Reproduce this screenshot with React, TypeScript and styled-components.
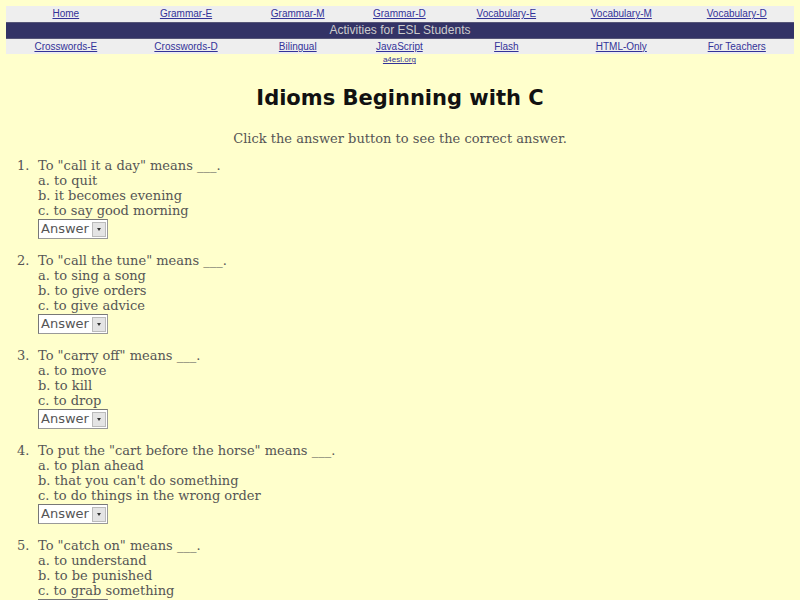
import React from 'react';
import styled, { createGlobalStyle } from 'styled-components';

const Global = createGlobalStyle`
  html, body {
    margin: 0;
    padding: 0;
    background: #FFFFCC;
  }
  body {
    font-family: "DejaVu Serif", serif;
  }
`;

const Page = styled.div`
  padding: 6px 6px 0 6px;
`;

const Nav = styled.table`
  width: 100%;
  border-collapse: collapse;
  font-family: "Liberation Sans", Arial, sans-serif;
  font-size: 10px;
  td {
    text-align: center;
    padding: 0;
  }
`;

const LinkRow = styled.tr`
  background: #EEEEEE;
  height: 16px;
  a {
    color: #333399;
    text-decoration: underline;
  }
`;

const BannerRow = styled.tr`
  background: #333366;
  height: 16px;
  td {
    color: #CCCCCC;
    font-size: 12px;
    border-top: 1px solid #555577;
    border-bottom: 1px solid #555577;
  }
`;

const SiteRow = styled.tr`
  td {
    font-size: 8px;
    padding-top: 1px;
  }
  a {
    color: #333399;
  }
`;

const Title = styled.h1`
  margin: 22px 0 0 0;
  text-align: center;
  font-family: "DejaVu Sans", sans-serif;
  font-weight: bold;
  font-size: 21px;
  color: #111;
`;

const Intro = styled.p`
  margin: 21px 0 0 0;
  text-align: center;
  font-size: 13px;
  color: #555;
`;

const Quiz = styled.ol`
  margin: 12px 0 0 0;
  padding: 0 0 0 11px;
  list-style: none;
  font-size: 13px;
  line-height: 15px;
  color: #555;
`;

const Question = styled.li`
  display: grid;
  grid-template-columns: 21px 1fr;
  margin-bottom: 14px;
`;

const Num = styled.span``;

const Body = styled.div``;

const Choice = styled.div``;

const Select = styled.div`
  display: flex;
  width: max-content;
  align-items: stretch;
  margin-top: 1px;
  height: 18px;
  border: 1px solid #999;
  border-top-color: #777;
  border-left-color: #777;
  background: #fff;
  font-family: "DejaVu Sans", sans-serif;
  font-size: 13px;
  color: #555;
`;

const SelectText = styled.span`
  padding: 0 2px 0 2px;
  line-height: 18px;
`;

const Arrow = styled.span`
  width: 12px;
  margin: 2px 1px 1px 1px;
  background: #e4e4e4;
  border: 1px solid #bbb;
  display: flex;
  align-items: center;
  justify-content: center;
  &::after {
    content: '';
    border-left: 2.5px solid transparent;
    border-right: 2.5px solid transparent;
    border-top: 3px solid #333;
  }
`;

const top = ['Home', 'Grammar-E', 'Grammar-M', 'Grammar-D', 'Vocabulary-E', 'Vocabulary-M', 'Vocabulary-D'];
const bottom = ['Crosswords-E', 'Crosswords-D', 'Bilingual', 'JavaScript', 'Flash', 'HTML-Only', 'For Teachers'];

const questions = [
  { q: 'To "call it a day" means ___.', a: ['to quit', 'it becomes evening', 'to say good morning'] },
  { q: 'To "call the tune" means ___.', a: ['to sing a song', 'to give orders', 'to give advice'] },
  { q: 'To "carry off" means ___.', a: ['to move', 'to kill', 'to drop'] },
  { q: 'To put the "cart before the horse" means ___.', a: ['to plan ahead', "that you can't do something", 'to do things in the wrong order'] },
  { q: 'To "catch on" means ___.', a: ['to understand', 'to be punished', 'to grab something'] },
];

export default function App() {
  return (
    <Page>
      <Global />
      <Nav>
        <tbody>
          <LinkRow>
            {top.map((t) => (
              <td key={t}><a href="#">{t}</a></td>
            ))}
          </LinkRow>
          <BannerRow>
            <td colSpan={7}>Activities for ESL Students</td>
          </BannerRow>
          <LinkRow>
            {bottom.map((t) => (
              <td key={t}><a href="#">{t}</a></td>
            ))}
          </LinkRow>
          <SiteRow>
            <td />
            <td />
            <td />
            <td><a href="#">a4esl.org</a></td>
            <td />
            <td />
            <td />
          </SiteRow>
        </tbody>
      </Nav>
      <Title>Idioms Beginning with C</Title>
      <Intro>Click the answer button to see the correct answer.</Intro>
      <Quiz>
        {questions.map((item, n) => (
          <Question key={item.q}>
            <Num>{n + 1}.</Num>
            <Body>
              {item.q}
              {item.a.map((c, i) => (
                <Choice key={c}>{'abc'[i]}. {c}</Choice>
              ))}
              <Select>
                <SelectText>Answer</SelectText>
                <Arrow />
              </Select>
            </Body>
          </Question>
        ))}
      </Quiz>
    </Page>
  );
}
